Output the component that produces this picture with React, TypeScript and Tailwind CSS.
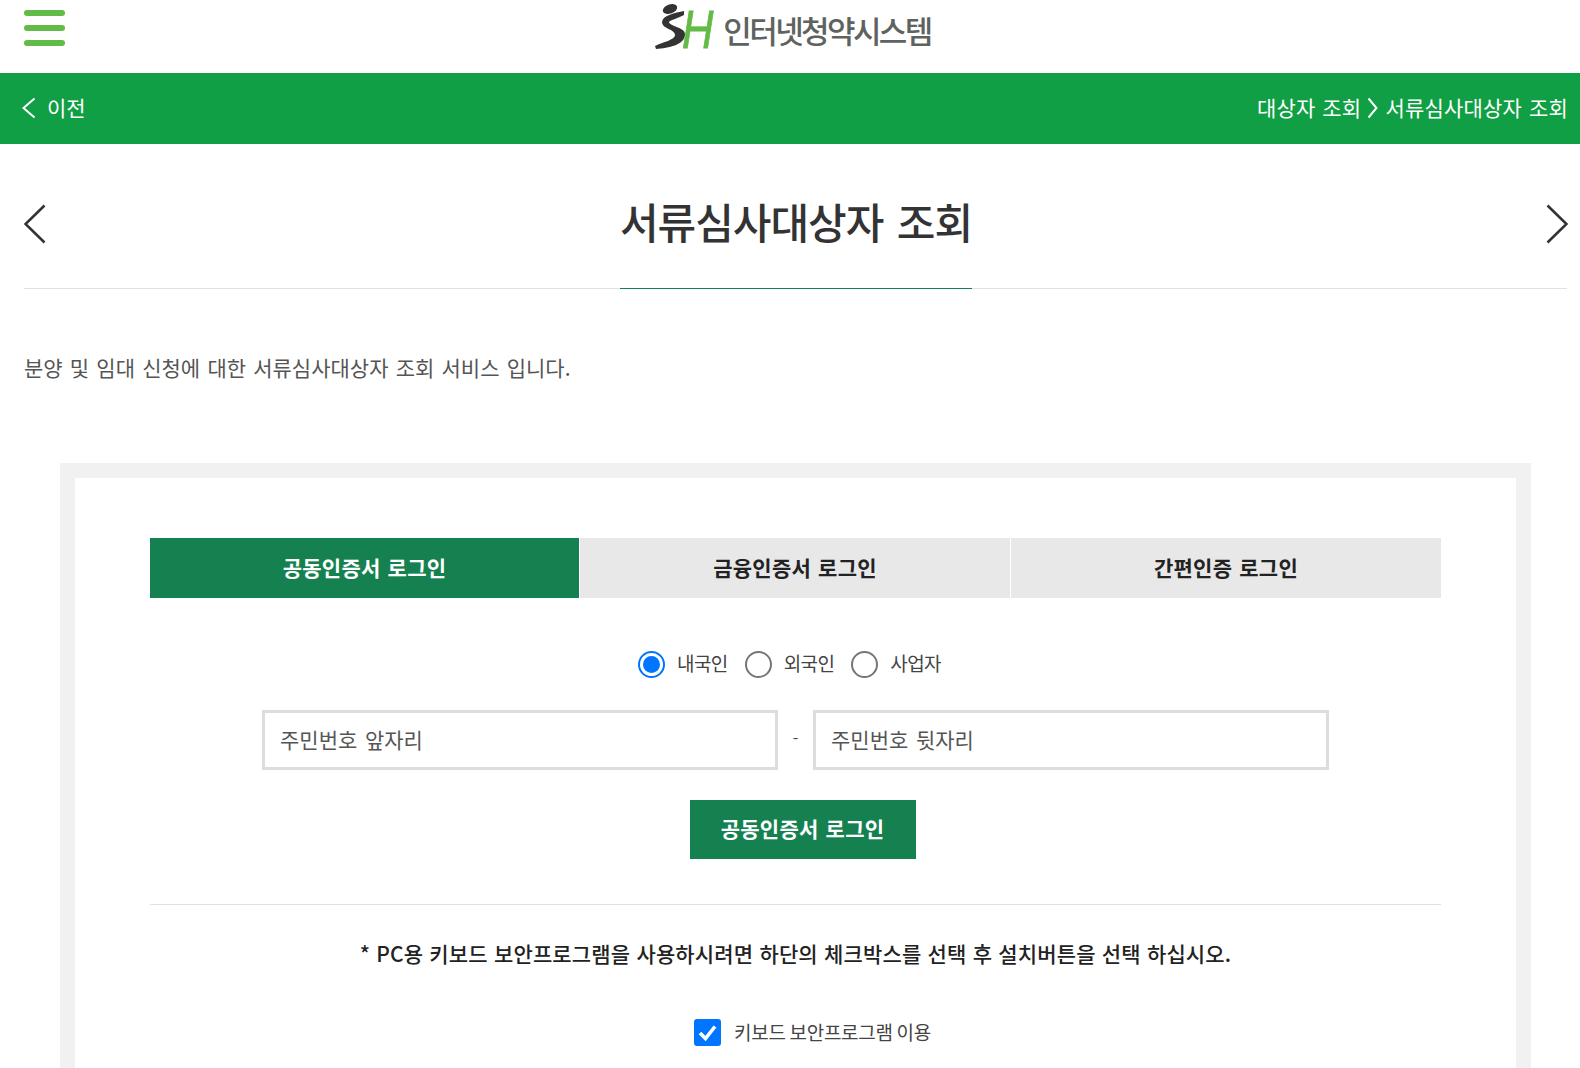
const font = "font-['Noto_Sans_CJK_KR','Noto_Sans',sans-serif]";

function Chevron({ dir, className, w, h, sw }: { dir: "left" | "right"; className?: string; w: number; h: number; sw: number }) {
  const pts = dir === "left" ? `${w - 1.5},1.5 1.5,${h / 2} ${w - 1.5},${h - 1.5}` : `1.5,1.5 ${w - 1.5},${h / 2} 1.5,${h - 1.5}`;
  return (
    <svg width={w} height={h} viewBox={`0 0 ${w} ${h}`} className={className}>
      <polyline points={pts} fill="none" stroke="currentColor" strokeWidth={sw} />
    </svg>
  );
}

function SiteHeader() {
  return (
    <header className="relative flex h-[73px] items-start justify-center bg-white">
      <button className="absolute left-6 top-[10px] flex w-[41px] flex-col gap-[9px]">
        <span className="h-[6px] rounded-sm bg-[#62bb46]" />
        <span className="h-[6px] rounded-sm bg-[#62bb46]" />
        <span className="h-[6px] rounded-sm bg-[#62bb46]" />
      </button>
      <div className="mr-[7px] flex items-start">
        <svg width="31" height="50" viewBox="0 0 31 50" className="ml-[2px]">
          <ellipse cx="15" cy="9" rx="7.5" ry="4.5" fill="#333" transform="rotate(-20 15 9)" />
          <path d="M29 11 C20 13 8 15 7 22 C7 29 20 29 20 35 C20 40 8 42 0 46 L1 49 C14 48 29 45 30 35 C31 27 15 27 14 22 C15 20 24 18 29 15 Z" fill="#333" />
        </svg>
        <span className="ml-[-4px] mt-[6px] w-[30px] origin-left scale-x-[0.82] text-[53px] leading-[48px] italic text-[#62bb46] [-webkit-text-stroke:0.8px_#62bb46] font-['Liberation_Sans',sans-serif]">H</span>
        <span className="ml-[11px] mt-[14px] text-[31px] font-medium leading-none tracking-[-2.6px] text-[#5f6360]">인터넷청약시스템</span>
      </div>
    </header>
  );
}

function Breadcrumb() {
  return (
    <div className="flex h-[71px] items-center justify-between bg-[#109f44] pb-[2px] pl-[22px] pr-[23px] text-[21px] text-white">
      <a className="flex items-center gap-[11px]">
        <Chevron dir="left" w={14} h={22} sw={2} />
        <span>이전</span>
      </a>
      <div className="flex items-center tracking-[0.2px] [word-spacing:2px]">
        <span>대상자 조회</span>
        <Chevron dir="right" w={11} h={22} sw={2} className="ml-[6px] mr-[7px]" />
        <span>서류심사대상자 조회</span>
      </div>
    </div>
  );
}

function PageTitle() {
  return (
    <div className="mx-6 flex h-[145px] items-end justify-between border-b border-[#e1e1e1] text-[#333]">
      <Chevron dir="left" w={22} h={40} sw={2.6} className="mb-[44px]" />
      <h1 className="mb-[-1px] flex h-[100%] items-center border-b border-[#168150] pb-[2px] pt-[10px] text-[42px] font-medium tracking-[-1px] [word-spacing:5px]">
        서류심사대상자 조회
      </h1>
      <Chevron dir="right" w={22} h={40} sw={2.6} className="mb-[44px] mr-[-1px]" />
    </div>
  );
}

function Radio({ label, checked }: { label: string; checked?: boolean }) {
  return (
    <label className="flex items-center gap-[12px]">
      {checked ? (
        <span className="flex h-[27px] w-[27px] items-center justify-center rounded-full border-2 border-[#0075ff]">
          <span className="h-[17px] w-[17px] rounded-full bg-[#0075ff]" />
        </span>
      ) : (
        <span className="h-[27px] w-[27px] rounded-full border-2 border-[#767676]" />
      )}
      <span className="pb-[2px] text-[19px] tracking-[-0.6px] text-[#444]">{label}</span>
    </label>
  );
}

function Field({ placeholder }: { placeholder: string }) {
  return (
    <div className="flex h-[60px] w-[516px] items-center border-[3px] border-[#dddddd] pl-[15px] text-[21px] text-[#555] [word-spacing:3px]">
      {placeholder}
    </div>
  );
}

export default function App() {
  return (
    <div className={`${font} h-[1068px] overflow-hidden bg-white`}>
      <div className="w-[1591px]">
        <SiteHeader />
        <Breadcrumb />
        <PageTitle />
        <p className="mx-6 mt-[62px] text-[21px] leading-[32px] text-[#555] [word-spacing:2.5px]">
          분양 및 임대 신청에 대한 서류심사대상자 조회 서비스 입니다.
        </p>
        <section className="mx-[60px] mt-[80px] border-[15px] border-[#f1f1f1] px-[75px] pt-[60px] pb-10">
          <div className="grid h-[60px] grid-cols-[429px_1fr_1fr] gap-px text-[21px] font-bold tracking-[0.25px] [word-spacing:2px]">
            <div className="flex items-center justify-center bg-[#168150] text-white">공동인증서 로그인</div>
            <div className="flex items-center justify-center bg-[#e8e8e8] text-[#222]">금융인증서 로그인</div>
            <div className="flex items-center justify-center bg-[#e8e8e8] text-[#222]">간편인증 로그인</div>
          </div>
          <div className="mt-[51px] flex justify-center gap-[17px] pr-[12px]">
            <Radio label="내국인" checked />
            <Radio label="외국인" />
            <Radio label="사업자" />
          </div>
          <div className="mt-[30px] flex items-center justify-center gap-[13px]">
            <Field placeholder="주민번호 앞자리" />
            <span className="w-[9px] pb-[8px] text-center text-[16px] text-[#444]">-</span>
            <Field placeholder="주민번호 뒷자리" />
          </div>
          <div className="mt-[30px] flex justify-center pl-[14px]">
            <button className="flex h-[59px] w-[226px] items-center justify-center bg-[#168150] text-[21px] font-bold tracking-[0.25px] text-white [word-spacing:2px]">
              공동인증서 로그인
            </button>
          </div>
          <hr className="mt-[45px] border-[#e1e1e1]" />
          <p className="mt-[33px] text-center text-[21px] font-medium tracking-[0.15px] text-[#222] [word-spacing:1.3px]">
            * PC용 키보드 보안프로그램을 사용하시려면 하단의 체크박스를 선택 후 설치버튼을 선택 하십시오.
          </p>
          <label className="mt-[49px] flex items-center justify-center gap-[13px] pl-[34px]">
            <span className="flex h-[27px] w-[27px] items-center justify-center rounded-[3px] bg-[#0075ff]">
              <svg width="21" height="21" viewBox="0 0 21 21">
                <path d="M3 11 L8.5 16.5 L18 4.5" fill="none" stroke="white" strokeWidth="3.6" />
              </svg>
            </span>
            <span className="text-[19px] tracking-[-0.3px] text-[#444]">키보드 보안프로그램 이용</span>
          </label>
        </section>
      </div>
    </div>
  );
}
